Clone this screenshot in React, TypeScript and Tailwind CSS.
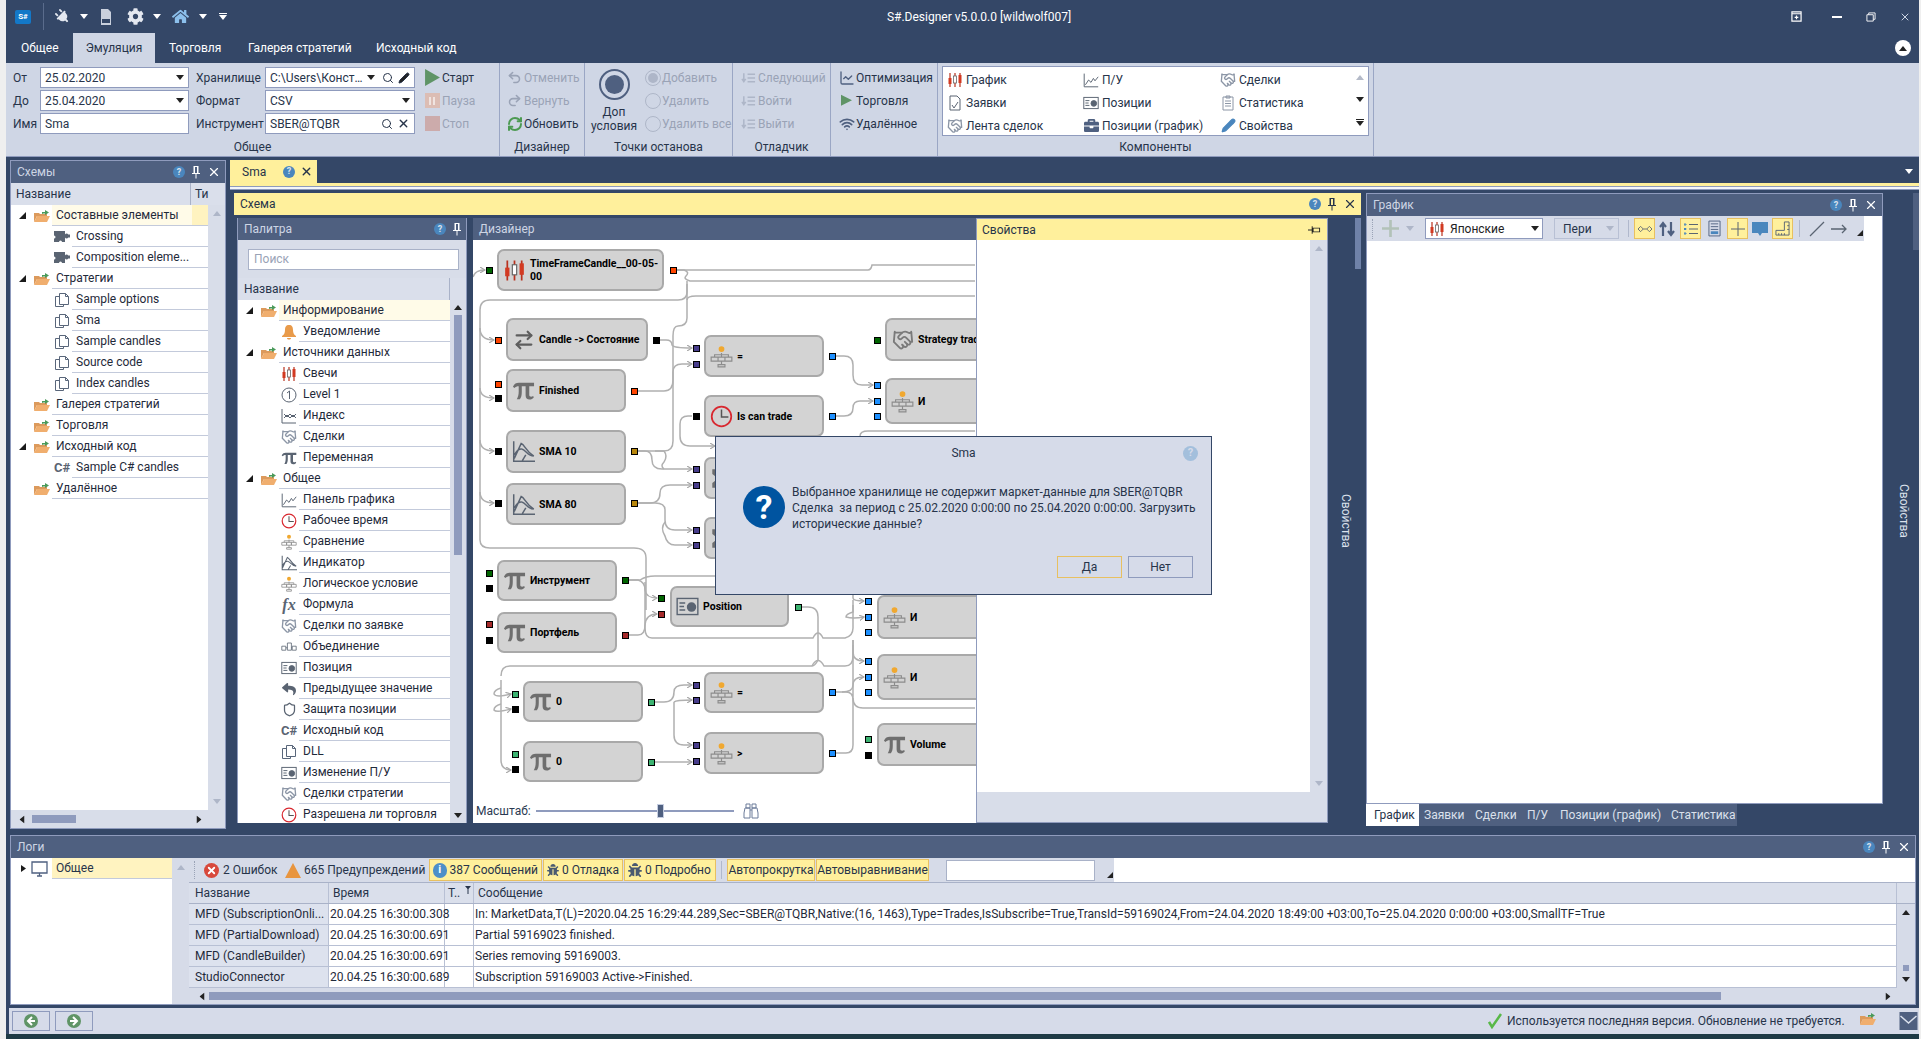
import type { ReactNode } from 'react'
import { ChartLine, Handshake, Pencil, Redo2, RefreshCw, Search, Shield, Undo2, Wifi, X, ArrowRightLeft } from 'lucide-react'
import { FaBug, FaReply, FaCog, FaPlug, FaHome, FaBriefcase } from 'react-icons/fa'

const Caret = ({ className = '' }: { className?: string }) => (
  <svg viewBox="0 0 8 5" className={`w-[8px] h-[5px] shrink-0 ${className}`}><path d="M0 0h8L4 5z" fill="currentColor" /></svg>
)

const Expander = ({ open = true }: { open?: boolean }) => (
  <svg viewBox="0 0 7 7" className="w-[7px] h-[7px] shrink-0 text-[#1a1a1a]">
    {open ? <path d="M7 0v7H0z" fill="currentColor" /> : <path d="M1 0l5 3.500L1 7z" fill="currentColor" />}
  </svg>
)

const Folder = () => (
  <svg viewBox="0 0 16 14" className="w-[16px] h-[14px] shrink-0">
    <path d="M0 4h5l1 1h7v2H3L0 13z" fill="#dc9a5c" />
    <path d="M3 7h13l-3 6H0z" fill="#f0ae6e" />
    <path d="M8 5V3h3V1l4 2.500L11 6V4.500H9.500z" fill="#4a9a5a" />
  </svg>
)

const Candles = () => (
  <svg viewBox="0 0 16 16" className="w-full h-full">
    <path d="M3 1v14M8 1v14M13 1v14" stroke="#b9321f" strokeWidth="1.200" />
    <rect x="1.500" y="6" width="3" height="6" fill="#d23a22" />
    <rect x="6.500" y="4" width="3" height="7" fill="#fff" stroke="#666" strokeWidth="0.800" />
    <rect x="11.500" y="3" width="3" height="8" fill="#d23a22" />
  </svg>
)

const Pi = ({ color = '#6e6e6e' }: { color?: string }) => (
  <svg viewBox="0 0 24 24" className="w-full h-full">
    <path d="M1 8c1.500-3 3.500-4 6-4h16v3.500h-5v9c0 1.500.8 2 2 2 .8 0 1.300-.3 2-.8l.8 1.300c-1 1.500-2.800 2.500-4.500 2.500-2.600 0-4.100-1.500-4.100-4.500V7.500h-4v6c0 3.500-.5 5.500-2 7.500H5c1.300-2.500 2-4.500 2-8V7.500C5 7.500 3.800 8 2.500 9.500z" fill={color} />
  </svg>
)

const Doc = () => (
  <svg viewBox="0 0 16 16" className="w-full h-full" fill="none" stroke="#59667a" strokeWidth="1">
    <path d="M5.500 1.500h6l3 3v8h-9zM11.500 1.500v3h3M5.500 4.500h-4v10h8v-2" />
  </svg>
)

const Puzzle = () => (
  <svg viewBox="0 0 16 11" className="w-[16px] h-[11px]">
    <path d="M0 0h5a1.500 1.500 0 0 1 3 0h3v3.500a1.800 1.800 0 0 1 3.200 0h1.800v3h-1.800a1.800 1.800 0 0 1-3.200 0V11H8a1.500 1.500 0 0 0-3 0H0V7.500a1.500 1.500 0 0 0 0-3z" fill="#5a6472" />
  </svg>
)

const Tree = ({ bulb = '#f0a830', line = '#8c8c8c' }: { bulb?: string; line?: string }) => (
  <svg viewBox="0 0 20 20" className="w-full h-full" fill="none" stroke={line} strokeWidth="1">
    <circle cx="10" cy="3.500" r="2.500" fill={bulb} stroke="none" />
    <path d="M1 10.500h6v3.500H1zM7 10.500h6v3.500H7zM13 10.500h6v3.500h-6zM7 17h6v2H7zM10 7v3.500M4 10.500V8.500h12v2M10 14v3" />
  </svg>
)

const Indicator = ({ color = '#5a6472' }: { color?: string }) => (
  <svg viewBox="0 0 20 20" className="w-full h-full" fill="none" stroke={color} strokeWidth="1.300">
    <path d="M1.500 1v17.500H20M2 16L8 3c3 1 4 7 11 11M2 13c2-4 5-6 7-5 3 1 5 6 10 6M9 18l3-5" />
  </svg>
)

const ChartPanel = () => (
  <svg viewBox="0 0 20 20" className="w-full h-full" fill="none" stroke="#5a6472" strokeWidth="1.200">
    <path d="M1.500 2v16.500H19M3 16l4-6 3 3 3-5 2 3 4-5" />
  </svg>
)

const Clock = () => (
  <svg viewBox="0 0 20 20" className="w-full h-full" fill="none">
    <circle cx="10" cy="10" r="8.500" stroke="#d8282f" strokeWidth="1.500" />
    <path d="M10 4v6.500h6" stroke="#555" strokeWidth="1.300" />
  </svg>
)

const PositionIcon = () => (
  <svg viewBox="0 0 20 18" className="w-full h-full" fill="none" stroke="#5a6472" strokeWidth="1.200">
    <rect x="1" y="2" width="18" height="14" />
    <path d="M3 6h5M3 9h4M3 12h5" />
    <circle cx="13.500" cy="9.500" r="3.500" fill="#5a6472" />
  </svg>
)

const Sigma = () => (
  <svg viewBox="0 0 20 20" className="w-full h-full"><path d="M2 2h14v4H8l5 4-5 4h8v4H2v-4l5-4-5-4z" fill="#6e6e6e" /></svg>
)

const LevelOne = () => (
  <svg viewBox="0 0 16 16" className="w-full h-full">
    <circle cx="8" cy="8" r="7" fill="none" stroke="#5a6472" />
    <path d="M6 6l2.500-2v8" fill="none" stroke="#5a6472" />
  </svg>
)

const Help = () => (
  <span className="inline-flex w-[12px] h-[12px] rounded-full items-center justify-center text-[9px] font-bold leading-none bg-[#4a86bd] text-[#dbe1ec]">?</span>
)

const Pin = ({ className = 'text-white' }: { className?: string }) => (
  <svg viewBox="0 0 10 14" className={`w-[10px] h-[14px] ${className}`}><path d="M2.500 1h5v7h1.500v1H5.500v4.500h-1V9H1V8h1.500zM6 2H4v6h2z" fill="currentColor" /></svg>
)

function PanelHeader({ title, pin = true, close = true, help = true, yellow = false }: { title: string; pin?: boolean; close?: boolean; help?: boolean; yellow?: boolean }) {
  return (
    <div className={`flex items-center h-[22px] shrink-0 pl-[6px] pr-[4px] gap-[6px] ${yellow ? 'bg-[#fff09c] text-[#27344a]' : 'bg-[#4f6080] text-[#cdd5e4]'}`}>
      <span className="flex-1 text-[12px]">{title}</span>
      {help && <Help />}
      {pin && <Pin className={yellow ? 'text-[#27344a]' : 'text-white'} />}
      {close && <X size={14} strokeWidth={2} className={yellow ? 'text-[#27344a]' : 'text-white'} />}
    </div>
  )
}

function TreeRow({ kind, label, icon, open, first = false, selected = false }: { kind: 'folder' | 'child'; label: string; icon?: ReactNode; open?: boolean; first?: boolean; selected?: boolean }) {
  if (kind === 'folder') {
    return (
      <div className="flex h-[21px] shrink-0">
        <div className="w-[41px] shrink-0 flex items-center pl-[8px]">
          <span className="w-[15px] flex">{open && <Expander />}</span>
          <Folder />
        </div>
        <div className={`flex-1 flex items-center pl-[4px] border-b border-[#c3cadb] ${selected || first ? 'bg-[#fffbe8]' : ''}`}>
          <span className="flex-1">{label}</span>
          {first && <span className="w-[16px] h-full bg-[#fff3c0]" />}
        </div>
      </div>
    )
  }
  return (
    <div className="flex h-[21px] shrink-0">
      <div className="w-[61px] shrink-0 flex items-center pl-[43px]"><span className="w-[16px] h-[16px] flex items-center justify-center">{icon}</span></div>
      <div className="flex-1 flex items-center pl-[4px] border-b border-[#c3cadb]">{label}</div>
    </div>
  )
}

const hand = <Handshake size={16} className="text-[#8c96a6]" />
const fx = <span className="font-['Liberation_Serif',serif] italic font-bold text-[16px] text-[#5a6472]">fx</span>
const csharp = <span className="font-bold text-[13px] text-[#5a6472] leading-none">C#</span>
const join = (
  <svg viewBox="0 0 20 12" className="w-full h-full" fill="none" stroke="#5a6472"><path d="M1 5h5v5H1zM8 1h5v9H8zM14 5h5v5h-5zM6 7h2M13 7h1" /></svg>
)

const palette: { kind: 'folder' | 'child'; label: string; icon?: ReactNode }[] = [
  { kind: 'folder', label: 'Информирование' },
  { kind: 'child', label: 'Уведомление', icon: <svg viewBox="0 0 16 16" className="w-full h-full"><path d="M8 1c3 0 4 2 4 5 0 3 1 5 3 6v1H1v-1c2-1 3-3 3-6 0-3 1-5 4-5zM6 14h4c0 2-4 2-4 0z" fill="#e89a4a" /></svg> },
  { kind: 'folder', label: 'Источники данных' },
  { kind: 'child', label: 'Свечи', icon: <Candles /> },
  { kind: 'child', label: 'Level 1', icon: <LevelOne /> },
  { kind: 'child', label: 'Индекс', icon: <svg viewBox="0 0 16 16" className="w-full h-full" fill="none" stroke="#5a6472"><path d="M1 1v14h14M3 10l3-3 3 3 3-3 3 3M3 6l3 3 3-3 3 3 3-3" /></svg> },
  { kind: 'child', label: 'Сделки', icon: hand },
  { kind: 'child', label: 'Переменная', icon: <Pi color="#5a6472" /> },
  { kind: 'folder', label: 'Общее' },
  { kind: 'child', label: 'Панель графика', icon: <ChartPanel /> },
  { kind: 'child', label: 'Рабочее время', icon: <Clock /> },
  { kind: 'child', label: 'Сравнение', icon: <Tree /> },
  { kind: 'child', label: 'Индикатор', icon: <Indicator /> },
  { kind: 'child', label: 'Логическое условие', icon: <Tree /> },
  { kind: 'child', label: 'Формула', icon: fx },
  { kind: 'child', label: 'Сделки по заявке', icon: hand },
  { kind: 'child', label: 'Объединение', icon: join },
  { kind: 'child', label: 'Позиция', icon: <PositionIcon /> },
  { kind: 'child', label: 'Предыдущее значение', icon: <FaReply size={14} className="text-[#5a6472]" /> },
  { kind: 'child', label: 'Защита позиции', icon: <Shield size={15} className="text-[#5a6472]" /> },
  { kind: 'child', label: 'Исходный код', icon: csharp },
  { kind: 'child', label: 'DLL', icon: <Doc /> },
  { kind: 'child', label: 'Изменение П/У', icon: <PositionIcon /> },
  { kind: 'child', label: 'Сделки стратегии', icon: hand },
  { kind: 'child', label: 'Разрешена ли торговля', icon: <Clock /> },
]

const puzzle = <Puzzle />
const schemes: { kind: 'folder' | 'child'; label: string; icon?: ReactNode; open?: boolean }[] = [
  { kind: 'folder', label: 'Составные элементы', open: true },
  { kind: 'child', label: 'Crossing', icon: puzzle },
  { kind: 'child', label: 'Composition eleme...', icon: puzzle },
  { kind: 'folder', label: 'Стратегии', open: true },
  { kind: 'child', label: 'Sample options', icon: <Doc /> },
  { kind: 'child', label: 'Sma', icon: <Doc /> },
  { kind: 'child', label: 'Sample candles', icon: <Doc /> },
  { kind: 'child', label: 'Source code', icon: <Doc /> },
  { kind: 'child', label: 'Index candles', icon: <Doc /> },
  { kind: 'folder', label: 'Галерея стратегий' },
  { kind: 'folder', label: 'Торговля' },
  { kind: 'folder', label: 'Исходный код', open: true },
  { kind: 'child', label: 'Sample C# candles', icon: csharp },
  { kind: 'folder', label: 'Удалённое' },
]

type NodeDef = { label: ReactNode; icon: ReactNode; x: number; y: number; w: number; h: number }
const nodes: NodeDef[] = [
  { label: <>TimeFrameCandle__00-05-<br />00</>, icon: <Candles />, x: 497, y: 249, w: 167, h: 42 },
  { label: 'Candle -> Состояние', icon: <ArrowRightLeft size={22} strokeWidth={2.400} className="text-[#5e5e5e]" />, x: 506, y: 318, w: 142, h: 43 },
  { label: 'Finished', icon: <Pi />, x: 506, y: 369, w: 120, h: 43 },
  { label: 'SMA 10', icon: <Indicator />, x: 506, y: 430, w: 120, h: 43 },
  { label: 'SMA 80', icon: <Indicator />, x: 506, y: 483, w: 120, h: 42 },
  { label: '=', icon: <Tree />, x: 704, y: 335, w: 120, h: 42 },
  { label: 'Is can trade', icon: <Clock />, x: 704, y: 395, w: 120, h: 42 },
  { label: '', icon: <Sigma />, x: 704, y: 457, w: 120, h: 42 },
  { label: '', icon: <Sigma />, x: 704, y: 517, w: 120, h: 42 },
  { label: 'Strategy trades', icon: <Handshake size={22} className="text-[#7a7a7a]" />, x: 885, y: 318, w: 130, h: 43 },
  { label: 'И', icon: <Tree />, x: 885, y: 378, w: 130, h: 46 },
  { label: 'Инструмент', icon: <Pi />, x: 497, y: 560, w: 120, h: 41 },
  { label: 'Портфель', icon: <Pi />, x: 497, y: 612, w: 120, h: 41 },
  { label: 'Position', icon: <PositionIcon />, x: 670, y: 586, w: 119, h: 41 },
  { label: 'И', icon: <Tree />, x: 877, y: 595, w: 130, h: 44 },
  { label: 'И', icon: <Tree />, x: 877, y: 654, w: 130, h: 46 },
  { label: '0', icon: <Pi />, x: 523, y: 681, w: 120, h: 41 },
  { label: '0', icon: <Pi />, x: 523, y: 741, w: 120, h: 41 },
  { label: '=', icon: <Tree />, x: 704, y: 672, w: 120, h: 41 },
  { label: '>', icon: <Tree />, x: 704, y: 732, w: 120, h: 42 },
  { label: 'Volume', icon: <Pi />, x: 877, y: 723, w: 130, h: 43 },
]

const portColor = {
  green: 'bg-[#006400]',
  orange: 'bg-[#ff4500]',
  black: 'bg-black',
  ochre: 'bg-[#b8860b]',
  purple: 'bg-[#483d8b]',
  blue: 'bg-[#1e90ff]',
  sea: 'bg-[#3cb371]',
  brown: 'bg-[#a52a2a]',
}
type PortKind = keyof typeof portColor
const ports: [number, number, PortKind][] = [
  [486, 267, 'green'], [670, 267, 'orange'], [495, 337, 'orange'], [653, 337, 'black'], [495, 381, 'orange'], [495, 395, 'black'],
  [631, 388, 'orange'], [495, 448, 'black'], [631, 448, 'ochre'], [495, 500, 'black'], [631, 500, 'ochre'],
  [693, 345, 'purple'], [693, 361, 'purple'], [829, 353, 'blue'], [693, 413, 'black'], [829, 413, 'blue'],
  [693, 466, 'purple'], [693, 482, 'purple'], [693, 527, 'purple'], [693, 542, 'purple'],
  [874, 337, 'green'], [874, 382, 'blue'], [874, 398, 'blue'], [874, 413, 'blue'],
  [486, 570, 'green'], [486, 585, 'black'], [622, 577, 'green'], [486, 621, 'brown'], [486, 637, 'black'], [622, 632, 'brown'],
  [658, 595, 'green'], [658, 611, 'brown'], [795, 604, 'sea'],
  [865, 598, 'blue'], [865, 614, 'blue'], [865, 629, 'blue'], [865, 658, 'blue'], [865, 674, 'blue'], [865, 689, 'blue'],
  [512, 691, 'sea'], [512, 706, 'black'], [648, 699, 'sea'], [512, 751, 'sea'], [512, 766, 'black'], [648, 759, 'sea'],
  [693, 682, 'purple'], [693, 697, 'purple'], [829, 689, 'blue'], [693, 742, 'purple'], [693, 758, 'purple'], [829, 750, 'blue'],
  [865, 736, 'sea'], [865, 752, 'black'],
]

// page coordinates, the svg viewBox starts at the canvas corner
const wiresArrow = [
  'M473 277Q475 270 485 270',
  'M480 328Q480 340 494 340',
  'M480 388Q480 398 494 398',
  'M480 440Q480 451 494 451',
  'M480 492Q480 503 494 503',
  'M660 340H666Q672 340 672 345Q673 348 692 348',
  'M638 391H664Q673 391 673 380V372Q673 364 682 364H692',
  'M692 416H688Q680 416 680 424V436Q680 446 690 446H715',
  'M836 356H844Q853 356 853 365V375Q853 385 862 385H873',
  'M836 416H844Q853 416 853 408Q853 401 860 401H873',
  'M638 451H645Q652 451 652 460Q652 469 662 469H692',
  'M638 503H650Q660 503 660 493Q660 485 670 485H692',
  'M638 503H655Q665 503 665 510V520Q665 530 675 530H692',
  'M665 522Q660 528 665 536Q667 545 675 545H692',
  'M629 580H638Q645 582 645 590Q646 598 657 598',
  'M629 635H638Q645 635 645 625Q646 614 657 614',
  'M853 580V598Q853 601 864 601',
  'M853 605V612Q846 614 846 617Q853 619 864 617',
  'M853 645V652Q853 661 864 661',
  'M842 692Q853 692 853 685Q853 677 864 677',
  'M655 702H664Q674 702 674 692Q674 685 684 685H692',
  'M674 702V735Q674 745 684 745H692',
  'M674 702Q676 700 692 700',
  'M655 762H692',
  'M501 680V760Q501 770 511 770',
  'M501 688Q494 690 494 694Q496 698 511 694',
  'M501 704Q494 706 494 710Q496 713 511 709',
]
const wires = [
  'M677 270H868Q871 270 872 265H975',
  'M677 270H684Q690 272 686 276Q683 279 690 281H975',
  'M687 281V292Q687 300 678 300H490Q480 300 480 310V540Q480 548 490 548H634Q646 548 646 558V610',
  'M687 300Q687 296 696 296H975',
  'M687 284V318Q687 326 678 326Q673 326 673 336V441Q673 451 664 451H638',
  'M655 451H664Q668 456 664 462Q660 466 664 469',
  'M860 440V436Q860 431 868 431H975',
  'M629 580H640Q646 576 655 576H715',
  'M645 582V628Q645 638 652 638H813Q818 628 823 638H845Q853 636 853 628V600',
  'M802 607H808Q818 607 818 617V660Q815 666 812 666H510Q501 666 501 676',
  'M812 666Q818 655 824 666H845Q853 666 853 656V640',
  'M836 692H846Q853 692 853 700M836 753H846Q853 753 853 745V640',
  'M853 698Q853 708 863 708H975',
]

function DesignerCanvas() {
  return (
    <div className="relative flex-1 bg-white overflow-hidden">
      <svg viewBox="473 240 502 583" className="absolute left-0 top-0 w-[502px] h-[583px]" fill="none">
        <defs>
          <marker id="arrowhead" markerWidth="6" markerHeight="6" refX="5" refY="3" orient="auto" markerUnits="userSpaceOnUse">
            <path d="M0 0L5 3L0 6" fill="none" stroke="#a8a8a8" strokeWidth="1.200" />
          </marker>
        </defs>
        {wires.map(d => <path key={d} d={d} stroke="#b0b0b0" strokeWidth="1.500" />)}
        {wiresArrow.map(d => <path key={d} d={d} stroke="#b0b0b0" strokeWidth="1.500" markerEnd="url(#arrowhead)" />)}
      </svg>
      {nodes.map((n, i) => (
        <div
          key={i}
          className="absolute flex items-center gap-[4px] pl-[4px] bg-[#d3d3d3] border-2 border-[#a9a9a9] rounded-[7px]"
          style={{ left: n.x - 473, top: n.y - 240, width: n.w, height: n.h }}
        >
          <span className="w-[23px] h-[23px] flex items-center justify-center shrink-0">{n.icon}</span>
          <span className="text-[10.5px] leading-[13px] font-bold text-black whitespace-nowrap">{n.label}</span>
        </div>
      ))}
      {ports.map(([x, y, kind], i) => (
        <span
          key={i}
          className={`absolute w-[7px] h-[7px] border border-black ${portColor[kind]}`}
          style={{ left: x - 473, top: y - 240 }}
        />
      ))}
      {/* zoom slider sits over the canvas */}
      <div className="absolute left-[3px] bottom-[4px] flex items-center text-[12px] h-[16px]">
        <span className="text-[#2b3a52]">Масштаб:</span>
        <div className="relative ml-[5px] w-[198px] h-[2px] bg-[#8f9bbd]">
          <span className="absolute left-[121px] -top-[6px] w-[7px] h-[14px] bg-[#4f6080] border border-[#c5cde0]" />
        </div>
        <svg viewBox="0 0 16 16" className="ml-[9px] w-[16px] h-[16px]" fill="none" stroke="#6d7c9a">
          <path d="M3 1h4v4H3zM9 1h4v4H9zM2 5h5v10H1v-5zM9 5h5l1 5v5H9zM7 7h2" />
        </svg>
      </div>
    </div>
  )
}

const Field = ({ children, w = 'w-[149px]' }: { children: ReactNode; w?: string }) => (
  <div className={`flex items-center h-[21px] pl-[4px] pr-[4px] gap-[4px] bg-white border border-[#8f9bbd] ${w}`}>{children}</div>
)

const Row = ({ children }: { children: ReactNode }) => <div className="flex items-center h-[23px]">{children}</div>

const Action = ({ icon, label, off = false, w = 'w-[19px]' }: { icon: ReactNode; label: string; off?: boolean; w?: string }) => (
  <div className={`flex items-center h-[23px] ${off ? 'text-[#9aa3b6]' : 'text-[#27344a]'}`}>
    <span className={`flex items-center justify-center shrink-0 ${w}`}>{icon}</span>
    <span className="whitespace-nowrap">{label}</span>
  </div>
)

const Group = ({ caption, className, children }: { caption: string; className: string; children: ReactNode }) => (
  <div className={`flex flex-col shrink-0 border-r border-[#9aa6c4] ${className}`}>
    <div className="flex-1 pt-[3px] flex">{children}</div>
    <div className="h-[18px] flex items-center justify-center text-[#27344a]">{caption}</div>
  </div>
)

const Radio = ({ on = false }: { on?: boolean }) => (
  <span className="w-[16px] h-[16px] rounded-full border border-[#aeb6c8] flex items-center justify-center">
    {on && <span className="w-[10px] h-[10px] rounded-full bg-[#aeb6c8]" />}
  </span>
)

const StepIcon = () => (
  <svg viewBox="0 0 16 12" className="w-[15px] h-[12px]" fill="none" stroke="#aeb6c8" strokeWidth="1.600"><path d="M3 1v8M1 7l2 3 2-3M7 2h8M7 6h8M7 10h8" /></svg>
)

const Comp = ({ icon, label }: { icon: ReactNode; label: string }) => (
  <div className="flex items-center h-[23px] whitespace-nowrap">
    <span className="w-[16px] h-[16px] flex items-center justify-center mr-[3px]">{icon}</span>{label}
  </div>
)

function Ribbon() {
  return (
    <div className="flex h-[94px] shrink-0 bg-[#cfd6e5] border-b border-[#8f9bbd]">
      <Group caption="Общее" className="w-[494px]">
        <div className="pl-[7px] text-[#27344a]">
          <Row>
            <span className="w-[27px]">От</span>
            <Field><span className="flex-1">25.02.2020</span><Caret className="text-[#222]" /></Field>
            <span className="w-[69px] ml-[7px]">Хранилище</span>
            <Field w="w-[150px]"><span className="flex-1 truncate">C:\Users\Конст...</span><Caret className="text-[#222]" /><Search size={12} className="ml-[3px]" /><Pencil size={12} fill="#222" /></Field>
            <Action icon={<svg viewBox="0 0 14 16" className="w-[15px] h-[17px]"><path d="M0 0l14 8L0 16z" fill="#5f9466" /></svg>} label="Старт" w="w-[18px] ml-[8px] mr-[1px]" />
          </Row>
          <Row>
            <span className="w-[27px]">До</span>
            <Field><span className="flex-1">25.04.2020</span><Caret className="text-[#222]" /></Field>
            <span className="w-[69px] ml-[7px]">Формат</span>
            <Field w="w-[150px]"><span className="flex-1">CSV</span><Caret className="text-[#222]" /></Field>
            <Action off icon={<span className="w-[15px] h-[15px] bg-[#dcbdb4] flex items-center justify-center gap-[2px]"><i className="w-[2px] h-[8px] bg-[#f0e4e0]" /><i className="w-[2px] h-[8px] bg-[#f0e4e0]" /></span>} label="Пауза" w="w-[18px] ml-[8px] mr-[1px]" />
          </Row>
          <Row>
            <span className="w-[27px]">Имя</span>
            <Field>Sma</Field>
            <span className="w-[69px] ml-[7px]">Инструмент</span>
            <Field w="w-[150px]"><span className="flex-1">SBER@TQBR</span><Search size={12} /><X size={13} strokeWidth={2.500} /></Field>
            <Action off icon={<span className="w-[15px] h-[15px] bg-[#ccabab]" />} label="Стоп" w="w-[18px] ml-[8px] mr-[1px]" />
          </Row>
        </div>
      </Group>

      <Group caption="Дизайнер" className="w-[85px]">
        <div className="pl-[5px]">
          <Action off icon={<Undo2 size={15} strokeWidth={2.500} />} label="Отменить" />
          <Action off icon={<Redo2 size={15} strokeWidth={2.500} />} label="Вернуть" />
          <Action icon={<RefreshCw size={16} strokeWidth={3} className="text-[#4c9a52]" />} label="Обновить" />
        </div>
      </Group>

      <Group caption="Точки останова" className="w-[148px]">
        <div className="w-[58px] flex flex-col items-center text-[#27344a] leading-[14px]">
          <span className="mt-[3px] mb-[5px] w-[31px] h-[31px] rounded-full border-2 border-[#4f6080] flex items-center justify-center">
            <span className="w-[19px] h-[19px] rounded-full bg-[#4f6080]" />
          </span>
          <span>Доп</span>
          <span>условия</span>
        </div>
        <div>
          <Action off icon={<Radio on />} label="Добавить" />
          <Action off icon={<Radio />} label="Удалить" />
          <Action off icon={<Radio />} label="Удалить все" />
        </div>
      </Group>

      <Group caption="Отладчик" className="w-[98px]">
        <div className="pl-[6px]">
          <Action off icon={<StepIcon />} label="Следующий" />
          <Action off icon={<StepIcon />} label="Войти" />
          <Action off icon={<StepIcon />} label="Выйти" />
        </div>
      </Group>

      <Group caption="" className="w-[107px]">
        <div className="pl-[6px]">
          <Action icon={<ChartLine size={16} className="text-[#4f6080]" />} label="Оптимизация" />
          <Action icon={<svg viewBox="0 0 14 16" className="w-[11px] h-[14px]"><path d="M0 0l14 7L0 14z" fill="#5f9466" /></svg>} label="Торговля" />
          <Action icon={<Wifi size={16} strokeWidth={2.500} className="text-[#4f6080]" />} label="Удалённое" />
        </div>
      </Group>

      <Group caption="Компоненты" className="w-[436px]">
        <div className="ml-[4px] w-[427px] h-[70px] bg-white border border-[#8f9bbd] flex text-[#27344a]">
          <div className="grid grid-cols-[136px_137px_1fr] flex-1 pl-[4px] pt-[1px]">
            <Comp icon={<Candles />} label="График" />
            <Comp icon={<ChartPanel />} label="П/У" />
            <Comp icon={hand} label="Сделки" />
            <Comp icon={<svg viewBox="0 0 14 16" className="w-[14px] h-[16px]" fill="none" stroke="#5a6472"><path d="M2 1h7l3 3v11H2zM4 10l2 3 4-6" /></svg>} label="Заявки" />
            <Comp icon={<PositionIcon />} label="Позиции" />
            <Comp icon={<svg viewBox="0 0 12 16" className="w-[12px] h-[16px]" fill="none" stroke="#8c96a6"><path d="M1 2h10v13H1zM4 1h4v2H4zM3 6h6M3 8.500h6M3 11h6" /></svg>} label="Статистика" />
            <Comp icon={hand} label="Лента сделок" />
            <Comp icon={<FaBriefcase size={15} className="text-[#4f6080]" />} label="Позиции (график)" />
            <Comp icon={<Pencil size={15} fill="#4a86bd" className="text-[#4a86bd]" />} label="Свойства" />
          </div>
          <div className="w-[16px] flex flex-col items-center justify-between py-[8px] pb-[9px]">
            <Caret className="rotate-180 text-[#b4bac8]" />
            <Caret className="text-[#222]" />
            <span className="flex flex-col items-center gap-[1px]"><i className="w-[8px] h-[1px] bg-[#222]" /><Caret className="text-[#222]" /></span>
          </div>
        </div>
      </Group>
    </div>
  )
}

const ToolYellow = ({ children }: { children: ReactNode }) => (
  <span className="w-[21px] h-[21px] flex items-center justify-center bg-[#fff09c] border border-[#e8c060]">{children}</span>
)

function ChartToolbar() {
  return (
    <div className="flex items-center h-[25px] w-[497px] shrink-0 bg-[#d6dbe8] text-[12px]">
      <span className="ml-[5px] w-[2px] h-[20px] border-l border-dotted border-[#9aa3b6]" />
      <svg viewBox="0 0 16 16" className="ml-[8px] w-[17px] h-[17px]"><path d="M8 0v16M0 8h16" stroke="#b2c2b8" strokeWidth="2.500" /></svg>
      <Caret className="ml-[7px] text-[#aeb6c8]" />
      <div className="ml-[11px] flex items-center w-[118px] h-[21px] bg-white border border-[#8f9bbd] pl-[3px] pr-[3px]">
        <span className="w-[16px] h-[16px] mr-[5px]"><Candles /></span>
        <span className="flex-1 text-[#222]">Японские</span>
        <Caret className="text-[#222]" />
      </div>
      <div className="ml-[11px] flex items-center w-[65px] h-[21px] border border-[#b8c0d4] pl-[8px] pr-[4px]">
        <span className="flex-1 text-[#27344a]">Пери</span>
        <Caret className="text-[#aeb6c8]" />
      </div>
      <span className="ml-[9px] w-px h-[17px] bg-[#b0b8cc]" />
      <span className="ml-[5px]"><ToolYellow><svg viewBox="0 0 16 8" className="w-[14px] h-[8px]" fill="none" stroke="#5a6472"><path d="M0 4l3-3 3 3-3 3zM10 4l3-3 3 3-3 3zM6 4h4" /></svg></ToolYellow></span>
      <svg viewBox="0 0 16 16" className="ml-[4px] w-[16px] h-[16px]"><path d="M4 15V4M1 6l3-4 3 4M12 1v11M9 10l3 4 3-4" fill="none" stroke="#4f6080" strokeWidth="2.200" /></svg>
      <span className="ml-[5px]"><ToolYellow><svg viewBox="0 0 14 12" className="w-[14px] h-[12px]" fill="none" stroke="#5a6472"><path d="M5 1.500h9M5 6h9M5 10.500h9" /><path d="M0 1h2v1H0zM0 5.500h2v1H0zM0 10h2v1H0z" stroke="#4a86bd" /></svg></ToolYellow></span>
      <svg viewBox="0 0 14 18" className="ml-[7px] w-[13px] h-[17px]" fill="none" stroke="#4f6080"><path d="M1 1h12v16H1zM3 4h8M3 7h8M3 10h8" /><rect x="3" y="12" width="8" height="3" fill="#4a86bd" stroke="none" /></svg>
      <span className="ml-[6px]"><ToolYellow><svg viewBox="0 0 14 14" className="w-[14px] h-[14px]"><path d="M7 0v14M0 7h14" stroke="#5a6472" /></svg></ToolYellow></span>
      <svg viewBox="0 0 16 16" className="ml-[4px] w-[16px] h-[16px]"><path d="M0 1h16v11H10l-2 3-2-3H0z" fill="#4a86bd" /></svg>
      <span className="ml-[4px]"><ToolYellow><svg viewBox="0 0 16 16" className="w-[15px] h-[15px]" fill="none" stroke="#5a6472"><path d="M1 10h9V1h5v14H1zM4 15v-2M7 15v-2M10 15v-2M15 5h-2M15 9h-2" /></svg></ToolYellow></span>
      <span className="ml-[6px] w-px h-[17px] bg-[#b0b8cc]" />
      <svg viewBox="0 0 16 16" className="ml-[9px] w-[16px] h-[16px]"><path d="M1 15L15 1" stroke="#5a6472" strokeWidth="1.300" /></svg>
      <svg viewBox="0 0 16 10" className="ml-[6px] w-[16px] h-[10px]" fill="none" stroke="#5a6472" strokeWidth="1.300"><path d="M0 5h15M11 1l4 4-4 4" /></svg>
      <svg viewBox="0 0 6 6" className="ml-[10px] mt-[9px] w-[6px] h-[6px]"><path d="M6 0v6H0z" fill="#222" /></svg>
    </div>
  )
}

const logBtn = 'flex items-center h-[22px] bg-[#fff09c] border border-[#e8c060] px-[3px] gap-[3px] shrink-0 whitespace-nowrap'

const logs = [
  { name: 'MFD (SubscriptionOnli...', time: '20.04.25 16:30:00.308', msg: 'In: MarketData,T(L)=2020.04.25 16:29:44.289,Sec=SBER@TQBR,Native:(16, 1463),Type=Trades,IsSubscribe=True,TransId=59169024,From=24.04.2020 18:49:00 +03:00,To=25.04.2020 0:00:00 +03:00,SmallTF=True' },
  { name: 'MFD (PartialDownload)', time: '20.04.25 16:30:00.691', msg: 'Partial 59169023 finished.' },
  { name: 'MFD (CandleBuilder)', time: '20.04.25 16:30:00.691', msg: 'Series removing 59169003.' },
  { name: 'StudioConnector', time: '20.04.25 16:30:00.689', msg: 'Subscription 59169003 Active->Finished.' },
]

function LogPanel() {
  return (
    <div className="flex flex-col ml-[4px] mr-[3px] h-[170px] shrink-0 border border-[#8f9bbd] bg-white text-[12px]">
      <PanelHeader title="Логи" />
      <div className="flex flex-1 min-h-0">
        <div className="w-[161px] shrink-0 flex flex-col">
          <div className="flex h-[21px]">
            <div className="w-[41px] flex items-center pl-[9px] gap-[4px]">
              <Expander open={false} />
              <svg viewBox="0 0 17 16" className="w-[17px] h-[16px]" fill="none" stroke="#4f6080"><path d="M1 1h15v11H1zM6 15h5M8.500 12v3" strokeWidth="1.300" /></svg>
            </div>
            <div className="flex-1 flex items-center pl-[4px] bg-[#fff3c0] border-b border-[#c3cadb]">Общее</div>
          </div>
        </div>
        <div className="w-[17px] shrink-0 bg-[#d6dbe8] flex justify-center pt-[7px]"><Caret className="rotate-180 text-[#aeb6c8]" /></div>
        <div className="flex-1 min-w-0 flex flex-col">
          <div className="flex items-center h-[24px] shrink-0 text-[#27344a]">
            <div className="flex items-center h-full bg-[#d6dbe8] pl-[5px] w-[925px]">
              <span className="w-[2px] h-[18px] border-l border-dotted border-[#9aa3b6] mr-[8px]" />
              <span className="w-[15px] h-[15px] rounded-full bg-[#d8493c] flex items-center justify-center mr-[4px]"><X size={11} strokeWidth={4} className="text-white" /></span>
              <span className="w-[62px] whitespace-nowrap">2 Ошибок</span>
              <svg viewBox="0 0 16 15" className="mr-[3px] w-[16px] h-[15px]"><path d="M8 0l8 15H0z" fill="#e8953f" /></svg>
              <span className="w-[125px] whitespace-nowrap">665 Предупреждений</span>
              <span className={`${logBtn} w-[113px]`}><span className="w-[15px] h-[15px] rounded-full bg-[#4d8fc8] text-white text-[11px] font-bold flex items-center justify-center">i</span>387 Сообщений</span>
              <span className={`${logBtn} w-[80px] ml-[1px]`}><FaBug size={14} className="text-[#4a5a70]" />0 Отладка</span>
              <span className={`${logBtn} w-[92px] ml-[1px]`}><FaBug size={14} className="text-[#4a5a70]" />0 Подробно</span>
              <span className="ml-[5px] w-px h-[18px] bg-[#b0b8cc]" />
              <span className={`${logBtn} w-[88px] ml-[5px] justify-center`}>Автопрокрутка</span>
              <span className={`${logBtn} w-[113px] ml-[1px] justify-center`}>Автовыравнивание</span>
              <span className="ml-[17px] w-[149px] h-[21px] bg-white border border-[#a9b2c8] shrink-0" />
              <svg viewBox="0 0 6 6" className="ml-[12px] mt-[9px] w-[6px] h-[6px] shrink-0"><path d="M6 0v6H0z" fill="#222" /></svg>
            </div>
          </div>
          <div className="flex h-[22px] shrink-0 bg-[#dadfeb] border-y border-[#a9b2c8] text-[#27344a]">
            <span className="w-[140px] pl-[6px] flex items-center border-r border-[#b8c0d4]">Название</span>
            <span className="w-[116px] pl-[4px] flex items-center border-r border-[#b8c0d4]">Время</span>
            <span className="w-[29px] pl-[3px] flex items-center border-r border-[#b8c0d4] relative">Т..<svg viewBox="0 0 6 8" className="absolute right-[2px] top-[3px] w-[6px] h-[8px]"><path d="M0 0h6L3.500 3v5h-1V3z" fill="#27344a" /></svg></span>
            <span className="flex-1 pl-[4px] flex items-center border-r border-[#b8c0d4]">Сообщение</span>
            <span className="w-[18px]" />
          </div>
          <div className="flex flex-1 min-h-0">
            <div className="flex-1 min-w-0 overflow-hidden">
              {logs.map(l => (
                <div key={l.name} className="flex h-[21px] border-b border-[#b8c0d4] text-[#1f2a3a] whitespace-nowrap">
                  <span className="w-[140px] shrink-0 pl-[6px] flex items-center bg-[#dde2ee] border-r border-[#b8c0d4]">{l.name}</span>
                  <span className="w-[116px] shrink-0 pl-[1px] flex items-center border-r border-[#b8c0d4]">{l.time}</span>
                  <span className="w-[29px] shrink-0 border-r border-[#b8c0d4]" />
                  <span className="pl-[1px] flex items-center">{l.msg}</span>
                </div>
              ))}
            </div>
            <div className="w-[19px] shrink-0 bg-[#d6dbe8] flex flex-col items-center pt-[6px] pb-[6px] justify-between border-l border-[#b8c0d4]">
              <Caret className="rotate-180 text-[#222]" />
              <span className="flex flex-col items-center gap-[6px]"><i className="w-[6px] h-[6px] bg-[#8f9bbd]" /><Caret className="text-[#222]" /></span>
            </div>
          </div>
          <div className="flex items-center h-[16px] shrink-0 bg-[#d6dbe8] pl-[9px] pr-[23px]">
            <Caret className="rotate-90 text-[#222]" />
            <span className="ml-[3px] w-[1512px] h-[8px] bg-[#8f9bbd]" />
            <span className="flex-1" />
            <Caret className="-rotate-90 text-[#222]" />
          </div>
        </div>
      </div>
    </div>
  )
}

function Dialog() {
  return (
    <div className="absolute left-[715px] top-[436px] w-[497px] h-[159px] bg-[#d6dbe9] border border-[#344767] flex flex-col text-[12px] text-[#27344a]">
      <div className="relative h-[32px] flex items-center justify-center shrink-0">
        Sma
        <span className="absolute right-[13px] top-[9px] w-[15px] h-[15px] rounded-full bg-[#a3bfdc] text-[#d6dbe9] text-[11px] font-bold flex items-center justify-center">?</span>
      </div>
      <div className="flex pl-[27px] pt-[17px] h-[85px]">
        <span className="w-[42px] h-[42px] rounded-full bg-[#0054a0] text-white text-[34px] font-bold flex items-center justify-center leading-none shrink-0">?</span>
        <p className="ml-[7px] leading-[16px] -mt-[2px] whitespace-pre">
          {'Выбранное хранилище не содержит маркет-данные для SBER@TQBR\nСделка  за период с 25.02.2020 0:00:00 по 25.04.2020 0:00:00. Загрузить\nисторические данные?'}
        </p>
      </div>
      <div className="flex justify-end gap-[6px] pr-[18px] pt-[2px]">
        <button className="w-[65px] h-[22px] border border-[#e8c060]">Да</button>
        <button className="w-[65px] h-[22px] border border-[#8f9bbd]">Нет</button>
      </div>
    </div>
  )
}

export default function App() {
  return (
    <div className="relative flex w-[1921px] h-[1039px] overflow-hidden bg-[#1e3a45] font-['Roboto',sans-serif] text-[12px] text-[#27344a]">
      <div className="w-[6px] shrink-0 bg-[#efefef]" />
      <div className="flex flex-col w-[1913px] shrink-0 h-[1034px] bg-[#344767]">
        {/* title bar */}
        <div className="flex items-center h-[33px] shrink-0 relative text-white">
          <span className="ml-[9px] w-[16px] h-[14px] rounded-[2px] bg-[#1378c8] text-[8px] font-bold flex items-center justify-center">S#</span>
          <span className="ml-[12px] w-px h-[27px] bg-[#5a6c8c]" />
          <FaPlug size={15} className="ml-[11px] text-[#e4e8f0] -rotate-45" />
          <Caret className="ml-[10px]" />
          <svg viewBox="0 0 12 16" className="ml-[12px] w-[12px] h-[16px]"><path d="M1 0h7l3 3v13H1z" fill="#c9d0dd" /><rect x="2" y="10" width="8" height="4" fill="#344767" /></svg>
          <FaCog size={17} className="ml-[15px] text-[#e4e8f0]" />
          <Caret className="ml-[9px]" />
          <FaHome size={17} className="ml-[11px] text-[#8cc0ec]" />
          <Caret className="ml-[10px]" />
          <span className="ml-[12px] flex flex-col items-center gap-[1px]"><i className="w-[8px] h-[1px] bg-white" /><Caret /></span>
          <span className="flex-1 text-center pr-[60px] text-[12px]">S#.Designer v5.0.0.0 [wildwolf007]</span>
          <svg viewBox="0 0 12 12" className="w-[11px] h-[11px] mr-[30px]" fill="none" stroke="white" strokeWidth="1.300"><path d="M1 1h10v10H1zM1 3h10M6 5v4M4 7h4" /></svg>
          <span className="w-[10px] h-[2px] bg-white mr-[24px]" />
          <svg viewBox="0 0 11 11" className="w-[10px] h-[10px] mr-[23px]" fill="none" stroke="white"><path d="M3 3V1h7v7H8M1 3h7v7H1z" /></svg>
          <X size={12} className="mr-[8px] text-[#cdd5e4]" />
        </div>
        {/* ribbon tabs */}
        <div className="flex items-stretch h-[30px] shrink-0 text-white relative">
          <span className="ml-[15px] w-[52px] flex items-center">Общее</span>
          <span className="w-[82px] flex items-center justify-center bg-[#cfd6e5] text-[#27344a]">Эмуляция</span>
          <span className="ml-[14px] w-[79px] flex items-center">Торговля</span>
          <span className="w-[128px] flex items-center">Галерея стратегий</span>
          <span className="flex items-center">Исходный код</span>
          <span className="ml-auto mr-[8px] self-center w-[16px] h-[16px] rounded-full bg-white flex items-center justify-center"><Caret className="rotate-180 text-[#222]" /></span>
        </div>
        <Ribbon />

        {/* workspace */}
        <div className="flex h-[673px] shrink-0 pt-[3px] pl-[4px]">
          {/* schemes */}
          <div className="w-[216px] h-[669px] shrink-0 flex flex-col border border-[#8f9bbd]">
            <PanelHeader title="Схемы" />
            <div className="flex h-[22px] shrink-0 bg-[#dadfeb]">
              <span className="w-[180px] pl-[5px] flex items-center border-r border-[#a9b2c8]">Название</span>
              <span className="pl-[4px] flex items-center">Ти</span>
            </div>
            <div className="flex flex-1 min-h-0 bg-white">
              <div className="w-[197px] shrink-0 flex flex-col text-[#1f2a3a]">
                {schemes.map((r, i) => <TreeRow key={r.label} {...r} first={i === 0} />)}
              </div>
              <div className="flex-1 bg-[#d8dde9] flex flex-col items-center justify-between py-[6px]">
                <Caret className="rotate-180 text-[#aeb6c8]" />
                <Caret className="text-[#aeb6c8]" />
              </div>
            </div>
            <div className="flex items-center h-[18px] shrink-0 bg-[#d8dde9] pl-[7px] pr-[22px]">
              <Caret className="rotate-90 text-[#222]" />
              <span className="ml-[6px] w-[44px] h-[8px] bg-[#8f9bbd]" />
              <span className="flex-1" />
              <Caret className="-rotate-90 text-[#222]" />
            </div>
          </div>

          {/* documents */}
          <div className="flex-1 min-w-0 ml-[4px] flex flex-col">
            <div className="flex items-end h-[23px] shrink-0">
              <div className="flex items-center w-[87px] h-[23px] bg-[#fff09c] pl-[12px] pr-[4px] gap-[5px] text-[#27344a]">
                <span className="flex-1">Sma</span><Help /><X size={13} strokeWidth={2.500} className="text-[#27344a]" />
              </div>
              <div className="flex-1" />
              <Caret className="mr-[6px] mb-[9px] text-white" />
            </div>
            <div className="h-[3px] shrink-0 bg-[#fff09c]" />
            <div className="h-[4px] shrink-0 bg-[#f4f6fa] border-y border-[#8f9bbd]" />

            <div className="flex h-[636px] pl-[4px] pt-[3px] shrink-0">
              {/* scheme window */}
              <div className="w-[1127px] h-[633px] shrink-0 flex flex-col">
                <PanelHeader title="Схема" yellow />
                <div className="flex flex-1 min-h-0 pl-[3px] pt-[3px] pb-[3px]">
                  {/* palette */}
                  <div className="w-[230px] shrink-0 flex flex-col border-x border-[#8f9bbd] bg-white">
                    <PanelHeader title="Палитра" close={false} />
                    <div className="h-[38px] shrink-0 bg-[#d8dde9] flex items-center pl-[10px]">
                      <div className="w-[211px] h-[21px] bg-white border border-[#a9b2c8] flex items-center pl-[5px] text-[#9aa3b6]">Поиск</div>
                    </div>
                    <div className="flex h-[22px] shrink-0 bg-[#dadfeb]">
                      <span className="w-[212px] pl-[6px] flex items-center border-r border-[#a9b2c8]">Название</span>
                    </div>
                    <div className="flex flex-1 min-h-0">
                      <div className="w-[212px] shrink-0 overflow-hidden text-[#1f2a3a]">
                        {palette.map((r, i) => <TreeRow key={r.label} {...r} open={r.kind === 'folder'} selected={i === 0} />)}
                      </div>
                      <div className="flex-1 bg-[#d8dde9] flex flex-col items-center py-[5px]">
                        <Caret className="rotate-180 text-[#222]" />
                        <span className="mt-[5px] w-[8px] h-[240px] bg-[#8f9bbd]" />
                        <span className="flex-1" />
                        <Caret className="text-[#222]" />
                      </div>
                    </div>
                  </div>
                  {/* designer */}
                  <div className="w-[503px] ml-[6px] shrink-0 flex flex-col">
                    <PanelHeader title="Дизайнер" pin={false} close={false} help={false} />
                    <DesignerCanvas />
                  </div>
                  {/* properties */}
                  <div className="w-[352px] shrink-0 flex flex-col border border-[#8f9bbd] bg-[#d8dde9]">
                    <div className="flex items-center h-[21px] shrink-0 bg-[#fff09c] pl-[5px] pr-[6px]">
                      <span className="flex-1">Свойства</span>
                      <svg viewBox="0 0 14 10" className="w-[13px] h-[10px]"><path d="M0 4.500h4V1h1v1.500h8v5H5V9H4V5.500H0zM6 3.500v3h6v-3z" fill="#222" /></svg>
                    </div>
                    <div className="flex h-[552px] shrink-0">
                      <div className="w-[333px] bg-white" />
                      <div className="flex-1 flex flex-col items-center justify-between py-[6px]">
                        <Caret className="rotate-180 text-[#aeb6c8]" />
                        <Caret className="text-[#aeb6c8]" />
                      </div>
                    </div>
                  </div>
                  {/* collapsed side tab */}
                  <div className="flex flex-1 min-w-0">
                    <div className="flex-1 text-center pt-[1px] text-[#dbe1ec] [writing-mode:vertical-rl]">Свойства</div>
                    <div className="w-[6px] h-[51px] bg-[#6f82a8]" />
                  </div>
                </div>
              </div>

              {/* chart window */}
              <div className="w-[517px] ml-[5px] h-[633px] shrink-0 flex flex-col">
                <div className="flex flex-col h-[611px] shrink-0 border border-[#8f9bbd] bg-white">
                  <PanelHeader title="График" />
                  <ChartToolbar />
                </div>
                <div className="flex h-[22px] shrink-0 text-[#dbe1ec]">
                  <span className="w-[53px] bg-white text-[#27344a] flex items-center pl-[8px]">График</span>
                  <div className="w-[318px] flex items-center bg-[#4f6080]">
                    <span className="ml-[5px] w-[51px]">Заявки</span>
                    <span className="w-[52px]">Сделки</span>
                    <span className="w-[33px]">П/У</span>
                    <span className="w-[111px]">Позиции (график)</span>
                    <span>Статистика</span>
                  </div>
                </div>
              </div>
              <div className="flex-1 flex min-w-0 pl-[4px]">
                <div className="flex-1 text-center pt-[2px] text-[#dbe1ec] [writing-mode:vertical-rl]">Свойства</div>
                <div className="w-[6px] h-[57px] bg-[#4f6080]" />
              </div>
            </div>
          </div>
        </div>

        <div className="h-[5px] shrink-0" />
        <LogPanel />

        {/* status bar */}
        <div className="flex items-center h-[26px] mt-[3px] ml-[3px] shrink-0 bg-[#d6dbe9]">
          <span className="ml-[3px] w-[38px] h-[20px] border border-[#8f9bbd] flex items-center justify-center">
            <svg viewBox="0 0 14 14" className="w-[14px] h-[14px]"><circle cx="7" cy="7" r="7" fill="#5f9466" /><path d="M8 3L4 7l4 4M4 7h7" fill="none" stroke="white" strokeWidth="2" /></svg>
          </span>
          <span className="ml-[5px] w-[38px] h-[20px] border border-[#8f9bbd] flex items-center justify-center">
            <svg viewBox="0 0 14 14" className="w-[14px] h-[14px]"><circle cx="7" cy="7" r="7" fill="#5f9466" /><path d="M6 3l4 4-4 4M10 7H3" fill="none" stroke="white" strokeWidth="2" /></svg>
          </span>
          <span className="flex-1" />
          <svg viewBox="0 0 14 16" className="w-[14px] h-[16px] mr-[5px]"><path d="M1 9l3 5 9-13" fill="none" stroke="#58b848" strokeWidth="2.500" /></svg>
          <span className="w-[353px] whitespace-nowrap text-[#27344a]">Используется последняя версия. Обновление не требуется.</span>
          <span className="w-[18px] h-[18px] flex"><Folder /></span>
          <svg viewBox="0 0 18 18" className="ml-[21px] w-[19px] h-[18px] mr-[1px]"><rect width="18" height="18" fill="#4f6080" /><path d="M1 4l8 7 8-7" fill="none" stroke="#dbe1ec" strokeWidth="1.500" /></svg>
        </div>
      </div>
      <div className="w-[2px] shrink-0 bg-[#efefef]" />
      <Dialog />
    </div>
  )
}
